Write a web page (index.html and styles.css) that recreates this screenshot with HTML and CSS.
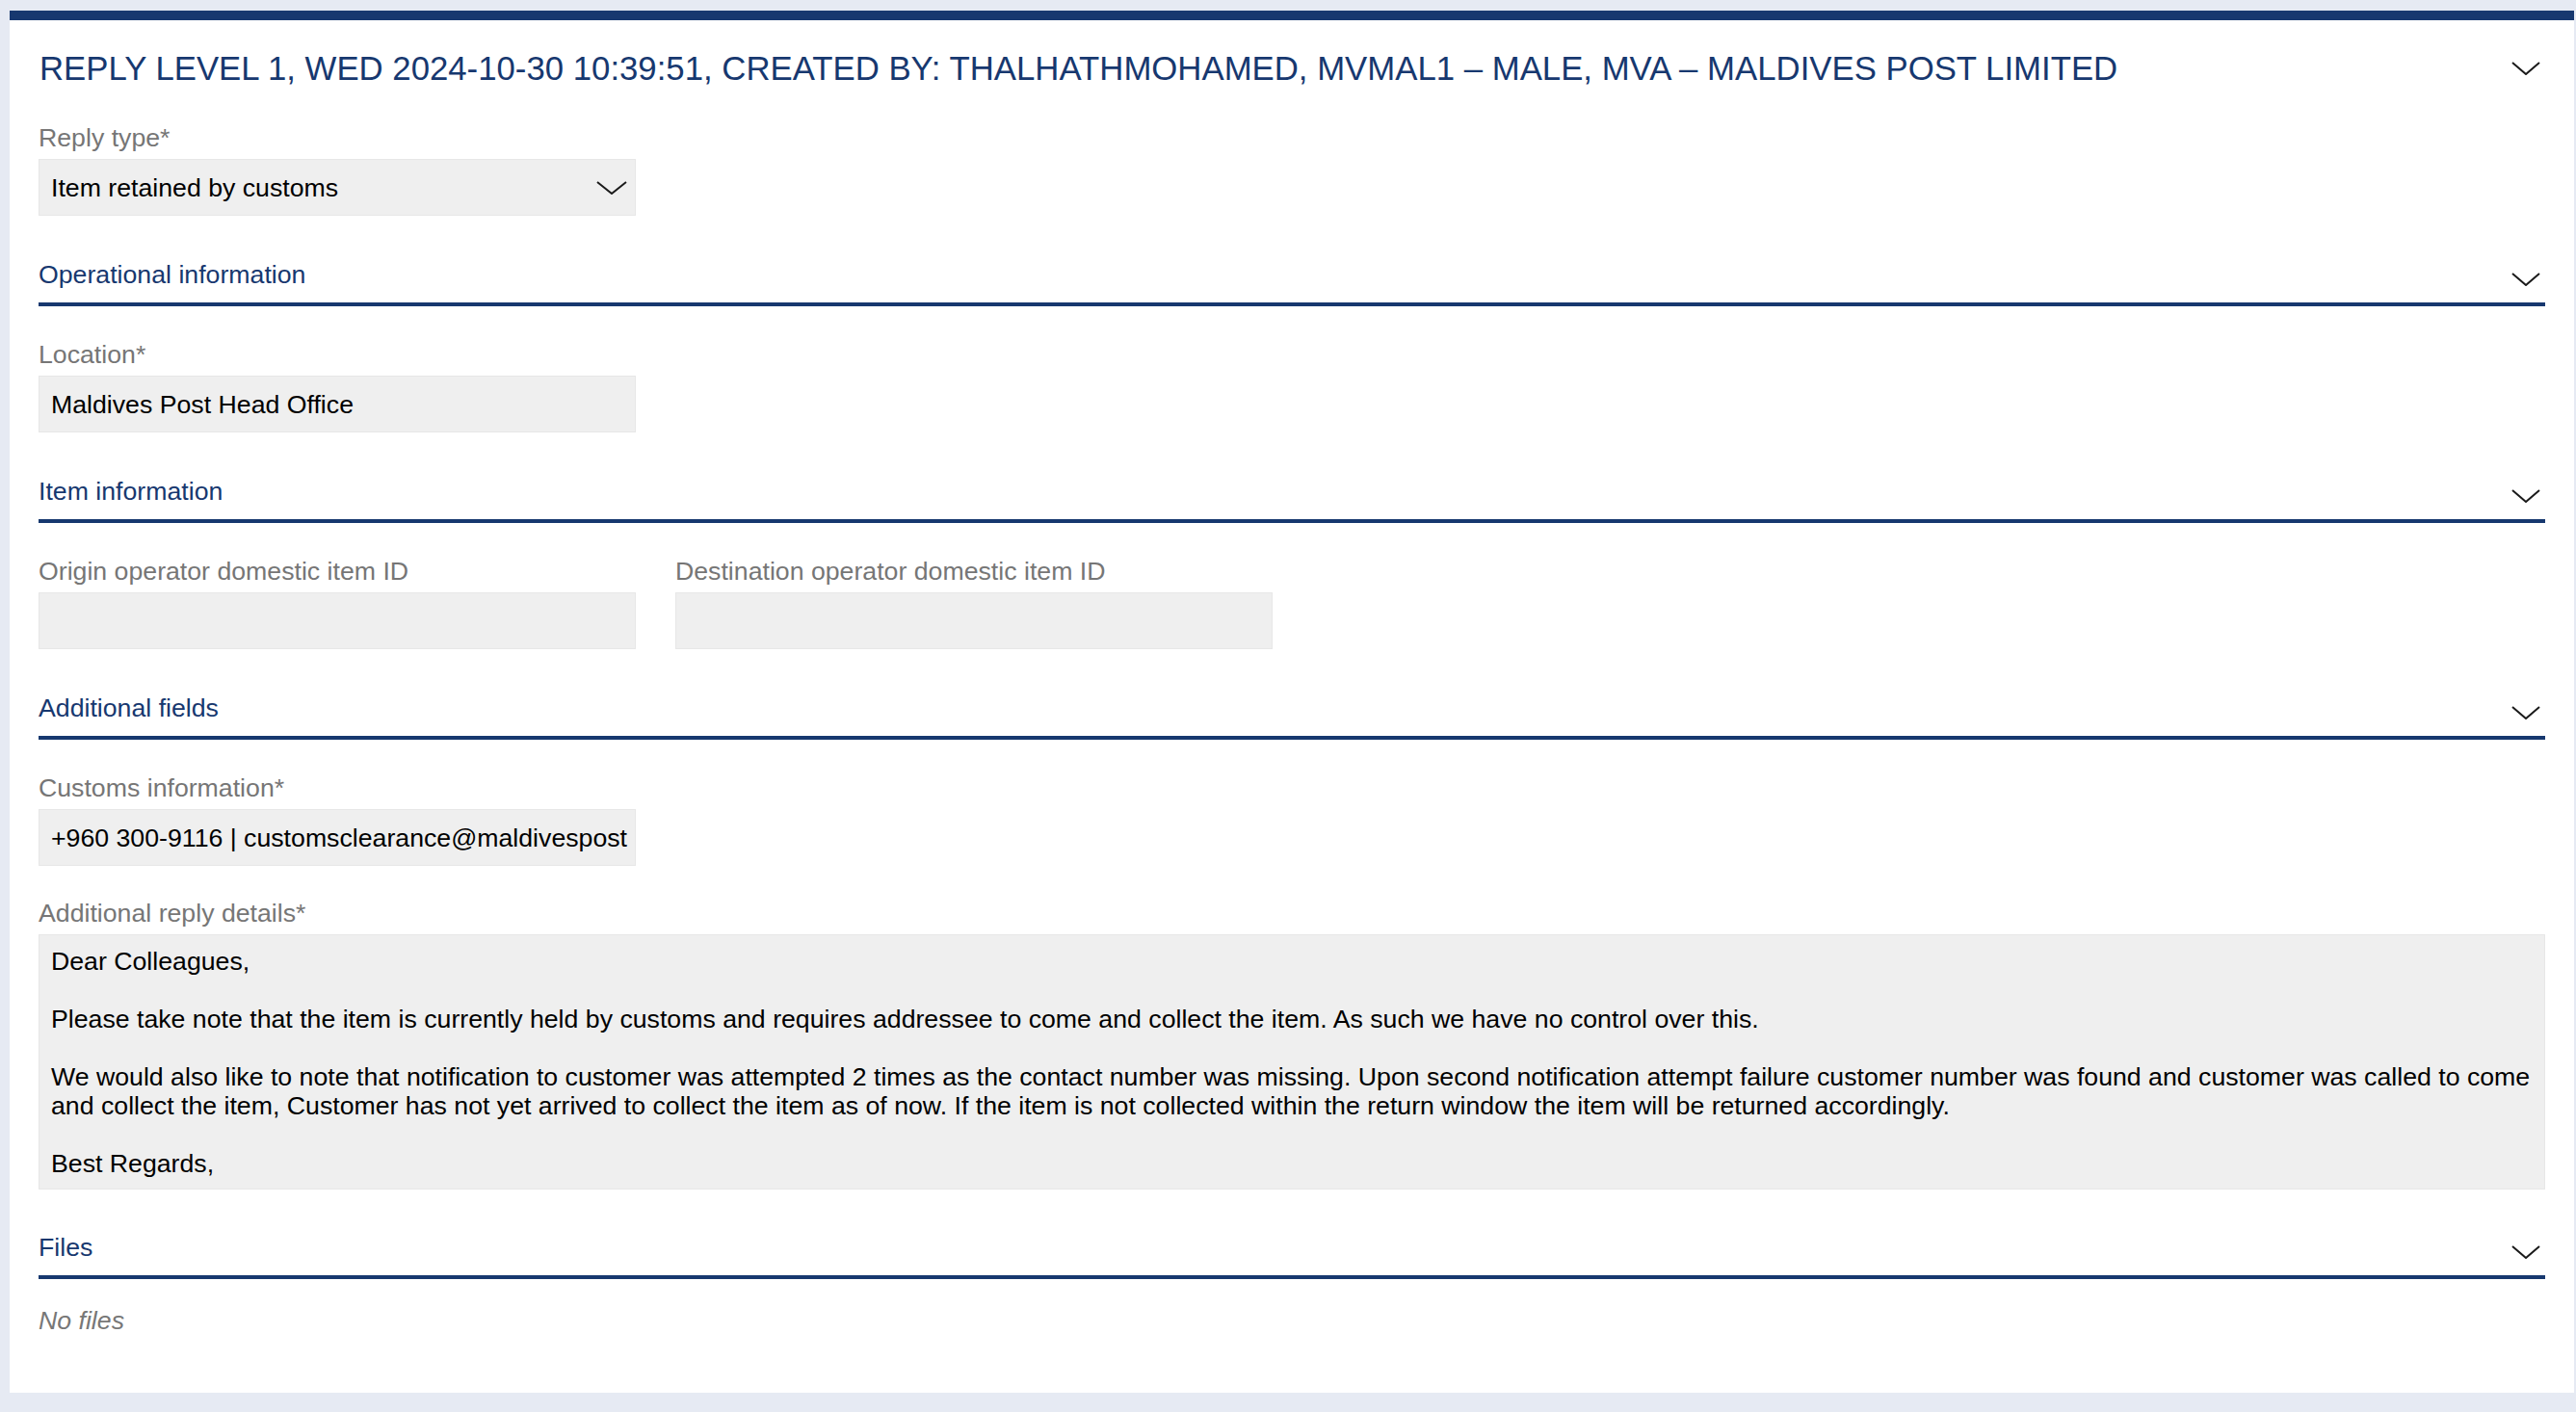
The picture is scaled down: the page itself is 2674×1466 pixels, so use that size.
FILE: index.html
```html
<!DOCTYPE html>
<html lang="en">
<head>
<meta charset="utf-8">
<title>Reply level 1</title>
<link rel="stylesheet" href="styles.css">
</head>
<body>
<div class="card">
  <div class="card-header">
    <h1 class="card-title">REPLY LEVEL 1, WED 2024-10-30 10:39:51, CREATED BY: THALHATHMOHAMED, MVMAL1 – MALE, MVA – MALDIVES POST LIMITED</h1>
    <svg class="chevron" viewBox="0 0 30 14"><polyline points="1,1 15,13 29,1"/></svg>
  </div>

  <div class="field">
    <div class="label">Reply type*</div>
    <div class="input select">
      <span>Item retained by customs</span>
      <svg class="chevron chevron-select" viewBox="0 0 32 14"><polyline points="1,1 16,13 31,1"/></svg>
    </div>
  </div>

  <section class="section">
    <div class="section-head">
      <span class="section-title">Operational information</span>
      <svg class="chevron chevron-sec" viewBox="0 0 30 14"><polyline points="1,1 15,13 29,1"/></svg>
    </div>
    <div class="section-body">
      <div class="field">
        <div class="label">Location*</div>
        <div class="input">Maldives Post Head Office</div>
      </div>
    </div>
  </section>

  <section class="section">
    <div class="section-head">
      <span class="section-title">Item information</span>
      <svg class="chevron chevron-sec" viewBox="0 0 30 14"><polyline points="1,1 15,13 29,1"/></svg>
    </div>
    <div class="section-body">
      <div class="field-row">
        <div class="field">
          <div class="label">Origin operator domestic item ID</div>
          <div class="input"></div>
        </div>
        <div class="field">
          <div class="label">Destination operator domestic item ID</div>
          <div class="input"></div>
        </div>
      </div>
    </div>
  </section>

  <section class="section">
    <div class="section-head">
      <span class="section-title">Additional fields</span>
      <svg class="chevron chevron-sec" viewBox="0 0 30 14"><polyline points="1,1 15,13 29,1"/></svg>
    </div>
    <div class="section-body">
      <div class="field">
        <div class="label">Customs information*</div>
        <div class="input clip">+960 300-9116 | customsclearance@maldivespost</div>
      </div>
      <div class="field field-gap">
        <div class="label">Additional reply details*</div>
        <div class="textarea">Dear Colleagues,

Please take note that the item is currently held by customs and requires addressee to come and collect the item. As such we have no control over this.

We would also like to note that notification to customer was attempted 2 times as the contact number was missing. Upon second notification attempt failure customer number was found and customer was called to come and collect the item, Customer has not yet arrived to collect the item as of now. If the item is not collected within the return window the item will be returned accordingly.

Best Regards,</div>
      </div>
    </div>
  </section>

  <section class="section section-last">
    <div class="section-head">
      <span class="section-title">Files</span>
      <svg class="chevron chevron-sec" viewBox="0 0 30 14"><polyline points="1,1 15,13 29,1"/></svg>
    </div>
    <div class="section-body files-body">
      <div class="empty">No files</div>
    </div>
  </section>
</div>
</body>
</html>
```
FILE: styles.css
```css
html, body {
  margin: 0;
  padding: 0;
}
body {
  background: #e6eaf3;
  font-family: "Liberation Sans", Arial, Helvetica, sans-serif;
  font-size: 26.7px;
  line-height: 30px;
  color: #000;
  padding: 11px 2px 20px 10px;
}
.card {
  background: #fff;
  border-top: 10px solid #17386f;
  padding: 30px 30px 60px 30px;
}
.card-header {
  display: flex;
  align-items: center;
  justify-content: space-between;
  margin-bottom: 37px;
}
.card-title {
  margin: 0;
  font-size: 34.75px;
  line-height: 40px;
  font-weight: normal;
  color: #17386f;
  padding-left: 1px;
}
.chevron {
  width: 30px;
  height: 14px;
  flex: none;
  margin-right: 5px;
}
.chevron polyline {
  fill: none;
  stroke: #1a1a1a;
  stroke-width: 2;
}
.chevron-select {
  width: 32px;
  margin-right: 0;
}
.label {
  color: #767676;
  margin-bottom: 7px;
}
.input {
  box-sizing: border-box;
  width: 620px;
  height: 59px;
  background: #efefef;
  border: 1px solid #e7e7e7;
  padding: 0 12px;
  display: flex;
  align-items: center;
  color: #000;
  white-space: nowrap;
  overflow: hidden;
}
.select {
  justify-content: space-between;
  padding-right: 8px;
}
.section {
  margin-top: 46px;
}
.section-last {
  margin-top: 45px;
}
.section-head {
  display: flex;
  justify-content: space-between;
  align-items: flex-end;
  padding-bottom: 14px;
  border-bottom: 4px solid #17386f;
}
.section-title {
  color: #17386f;
}
.chevron-sec {
  margin-bottom: 3px;
}
.section-body {
  padding-top: 35px;
}
.field-row {
  display: flex;
  gap: 41px;
}
.field-gap {
  margin-top: 34px;
}
.textarea {
  box-sizing: border-box;
  width: 100%;
  background: #efefef;
  border: 1px solid #e7e7e7;
  padding: 12px 12px 11px 12px;
  white-space: pre-wrap;
  color: #000;
}
.files-body {
  padding-top: 28px;
}
.empty {
  font-style: italic;
  color: #777;
}
```
